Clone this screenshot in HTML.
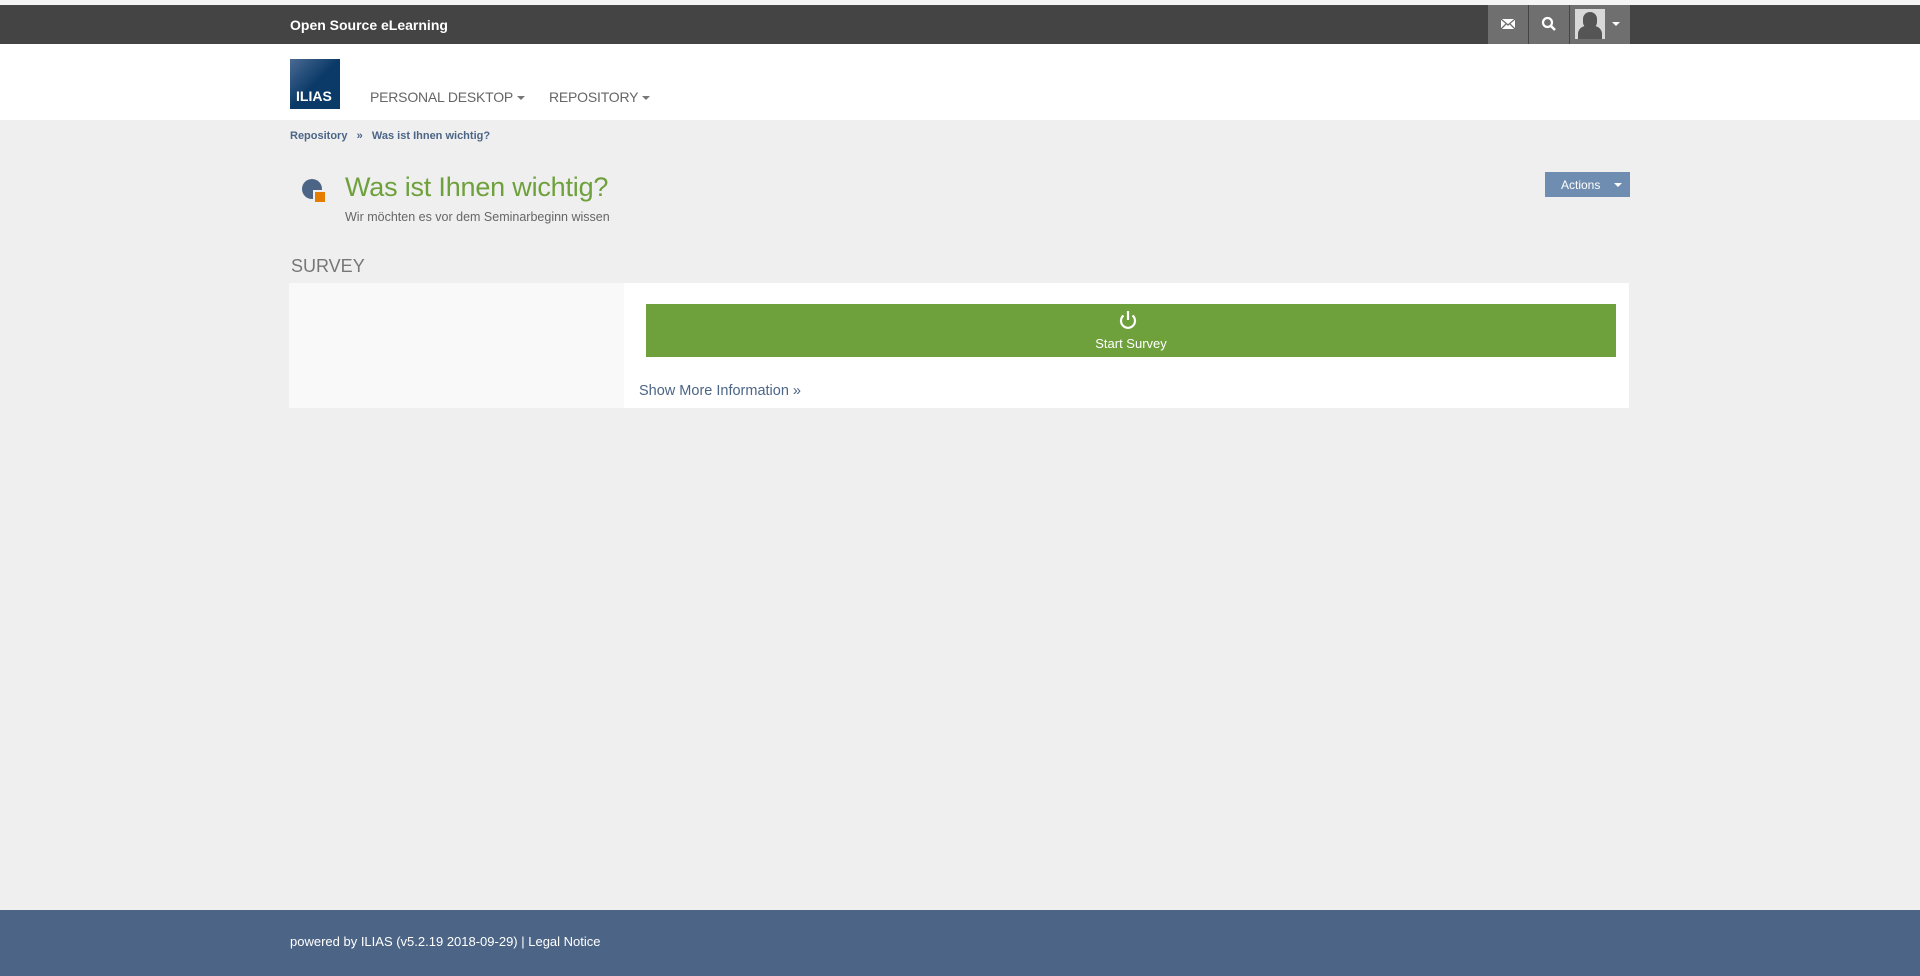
<!DOCTYPE html>
<html><head><meta charset="utf-8"><style>
*{box-sizing:border-box;margin:0;padding:0}
body{width:1920px;height:976px;background:#efefef;font-family:"Liberation Sans",sans-serif;position:relative;overflow:hidden}
.abs{position:absolute}
</style></head><body>
<div class="abs" style="left:0;top:0;width:1920px;height:5px;background:#f4f4f4"></div>
<div class="abs" style="left:0;top:5px;width:1920px;height:39px;background:#444"></div>
<div class="abs" style="left:290px;top:17px;color:#fff;font-size:14px;font-weight:bold">Open Source eLearning</div>
<div class="abs" style="left:1488px;top:5px;width:40px;height:39px;background:#6f6f6f"></div>
<div class="abs" style="left:1529px;top:5px;width:40px;height:39px;background:#6f6f6f"></div>
<div class="abs" style="left:1570px;top:5px;width:60px;height:39px;background:#6f6f6f"></div>
<svg class="abs" style="left:1500px;top:17px" width="16" height="14" viewBox="0 0 16 14"><rect x="1" y="2" width="14" height="10" fill="#fff"/><path d="M1 2L8 8L15 2M1 12L6 7M15 12L10 7" stroke="#6f6f6f" stroke-width="1.3" fill="none"/></svg>
<svg class="abs" style="left:1541px;top:16px" width="16" height="16" viewBox="0 0 16 16"><circle cx="6.5" cy="6.5" r="4.5" stroke="#fff" stroke-width="2.2" fill="none"/><path d="M10 10L14 14" stroke="#fff" stroke-width="2.6"/></svg>
<div class="abs" style="left:1575px;top:9px;width:30px;height:30px;background:#d8d8d8;overflow:hidden">
<div class="abs" style="left:8px;top:3px;width:14px;height:17px;border-radius:7px;background:#555"></div>
<div class="abs" style="left:3px;top:17px;width:24px;height:16px;border-radius:8px 8px 0 0;background:#555"></div></div>
<div class="abs" style="left:1612px;top:22px;border:4px solid transparent;border-top:4px solid #fff;border-bottom:0"></div>
<div class="abs" style="left:0;top:44px;width:1920px;height:76px;background:#fff"></div>
<div class="abs" style="left:290px;top:59px;width:50px;height:50px;background:linear-gradient(135deg,#4a6a93 0%,#0b3a68 50%,#0a3a66 100%)"></div>
<div class="abs" style="left:296px;top:88px;color:#fff;font-size:14px;font-weight:bold">ILIAS</div>
<div class="abs" style="left:370px;top:89px;color:#666;font-size:14px;letter-spacing:-0.2px">PERSONAL DESKTOP <span style="display:inline-block;border:4px solid transparent;border-top:4px solid #777;border-bottom:0;vertical-align:middle"></span></div>
<div class="abs" style="left:549px;top:89px;color:#666;font-size:14px;letter-spacing:-0.2px">REPOSITORY <span style="display:inline-block;border:4px solid transparent;border-top:4px solid #777;border-bottom:0;vertical-align:middle"></span></div>
<div class="abs" style="left:290px;top:130px;color:#4c6586;font-size:11px;font-weight:bold">Repository &nbsp;&nbsp;»&nbsp;&nbsp; Was ist Ihnen wichtig?</div>
<svg class="abs" style="left:300px;top:177px" width="28" height="28" viewBox="0 0 28 28"><circle cx="12" cy="12" r="10" fill="#4c6586"/><rect x="13" y="13" width="12" height="12" fill="#efefef"/><rect x="15" y="15" width="10" height="10" fill="#e57e00"/></svg>
<div class="abs" style="left:345px;top:172px;color:#6ea03c;font-size:27px;letter-spacing:-0.2px">Was ist Ihnen wichtig?</div>
<div class="abs" style="left:345px;top:210px;color:#666;font-size:12.5px">Wir möchten es vor dem Seminarbeginn wissen</div>
<div class="abs" style="left:1545px;top:172px;width:85px;height:25px;background:#6f8db0;color:#fff;font-size:12px;line-height:27px;padding-left:16px">Actions<span style="position:absolute;right:8px;top:11px;border:4px solid transparent;border-top:4px solid #fff;border-bottom:0"></span></div>
<div class="abs" style="left:291px;top:256px;color:#777;font-size:18px">SURVEY</div>
<div class="abs" style="left:289px;top:283px;width:1340px;height:125px;background:#fff"></div>
<div class="abs" style="left:289px;top:283px;width:335px;height:125px;background:#f9f9f9"></div>
<div class="abs" style="left:646px;top:304px;width:970px;height:53px;background:#6ea03c"></div>
<svg class="abs" style="left:1116px;top:308px" width="24" height="24" viewBox="0 0 24 24"><path d="M7.5 7.5A7 7 0 1 0 16.5 7.5" stroke="#fff" stroke-width="2.2" fill="none"/><path d="M12 3V12" stroke="#fff" stroke-width="2.2"/></svg>
<div class="abs" style="left:646px;top:336px;width:970px;text-align:center;color:#fff;font-size:13px">Start Survey</div>
<div class="abs" style="left:639px;top:383px;color:#4c6586;font-size:14.5px">Show More Information »</div>
<div class="abs" style="left:0;top:910px;width:1920px;height:66px;background:#4c6586"></div>
<div class="abs" style="left:290px;top:934px;color:#fff;font-size:13px">powered by ILIAS (v5.2.19 2018-09-29) | Legal Notice</div>
</body></html>
